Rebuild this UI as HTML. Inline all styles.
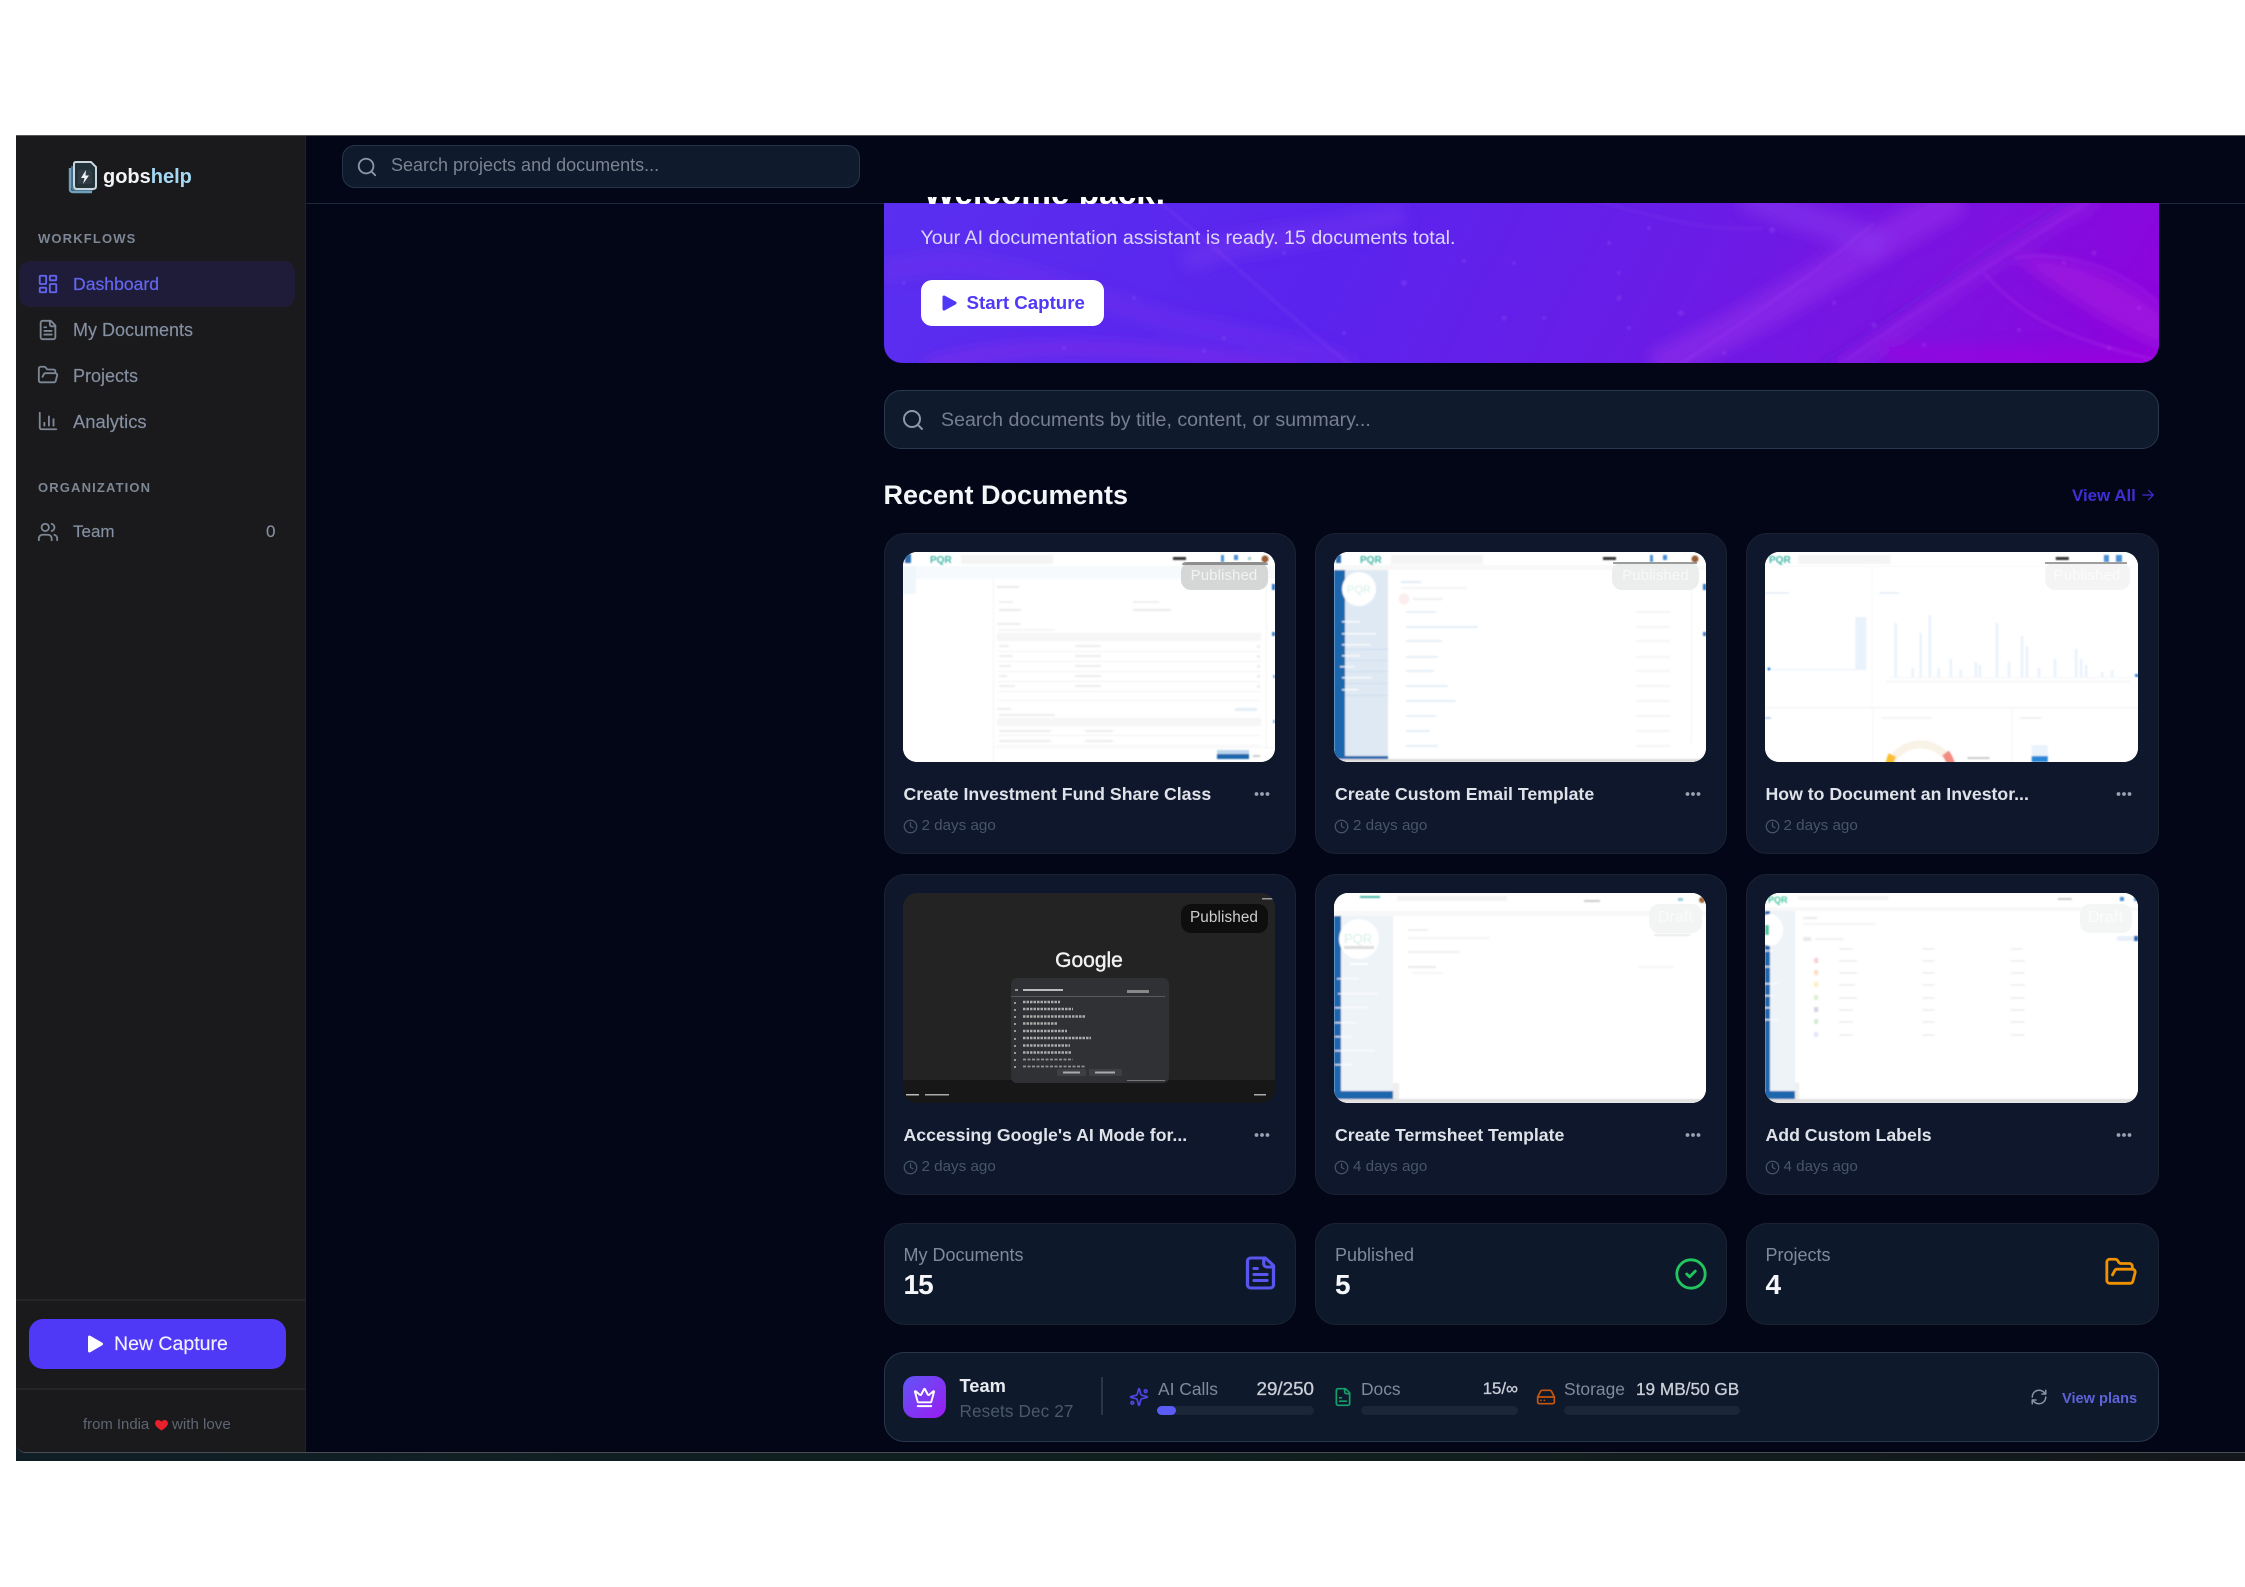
<!DOCTYPE html>
<html lang="en"><head><meta charset="utf-8"><title>gobshelp</title>
<style>
*{box-sizing:border-box;margin:0;padding:0}
html,body{width:2245px;height:1587px;background:#fff;overflow:hidden;font-family:"Liberation Sans",Arial,sans-serif}
#app{position:absolute;left:16px;top:135px;width:2229px;height:1318px;background:#020617;border-top:1px solid #555;border-bottom:1.5px solid #4a4d52;border-bottom-left-radius:10px;overflow:hidden}
.abs,.t,svg.i{position:absolute}
.t{white-space:nowrap;line-height:24px;height:24px}
svg.i{fill:none;stroke:currentColor;stroke-width:2;stroke-linecap:round;stroke-linejoin:round}
.box{position:absolute;background:#0f172a;border:1.5px solid #1e293b}
.card{position:absolute;width:412px;height:321px;background:#0e172b;border:1.5px solid #1c2230;border-radius:21px}
.thumb{position:absolute;left:18px;top:18px;width:372px;height:210px;border-radius:14px;overflow:hidden;background:#fff}
.thumb svg{display:block;width:372px;height:210px}
.title{position:absolute;left:19px;top:248px;font-size:17.7px;font-weight:700;color:#dfe3e9;line-height:24px;white-space:nowrap}
.dots{position:absolute;left:369px;top:257px;width:16px;height:6px}
.time{position:absolute;left:37px;top:280px;font-size:15.2px;color:#475569;line-height:24px;white-space:nowrap}
.clk{position:absolute;left:18px;top:285px;color:#475569}
.badge{position:absolute;top:28px;height:28px;border-radius:10px;font-size:15px;letter-spacing:.1px;line-height:28px;text-align:center;white-space:nowrap}
.nav{font-size:18px;color:#8590a2;-webkit-text-stroke:.15px #8590a2}
.sec{font-size:13px;font-weight:700;letter-spacing:1.15px;color:#7d8695}
.stat{position:absolute;top:1087px;width:412px;height:102px;background:#0e182b;border:1.5px solid #1c2230;border-radius:21px}
.stat .l{position:absolute;left:19px;top:19px;font-size:18px;color:#7f8a9c;line-height:24px;white-space:nowrap}
.stat .v{position:absolute;left:19px;top:44px;font-size:28px;font-weight:700;color:#f4f6f9;line-height:34px;letter-spacing:-1px}
.lab{font-size:17.4px;color:#7f8a9c}
.val{font-size:18.8px;color:#c9ced7;-webkit-text-stroke:.3px #c9ced7}
.bar{position:absolute;top:1270px;height:9px;background:#1b2639;border-radius:5px}
</style></head><body>
<!-- bottom strip behind the app frame -->
<div class="abs" style="left:16px;top:1440px;width:2229px;height:21px;background:linear-gradient(90deg,#101f26,#10201f 50%,#14181c)"></div>
<div id="app">

<!-- MAIN header -->
<div class="abs" style="left:290px;top:0;width:1939px;height:68px;background:#020617;border-bottom:1.5px solid #1e293b"></div>
<div class="box" style="left:326px;top:9px;width:518px;height:43px;border-radius:13px;background:#0f1a2c;border-color:#26344a"></div>
<svg class="i" style="left:340px;top:20px;color:#8d97a6" width="22" height="22" viewBox="0 0 24 24"><circle cx="11" cy="11" r="8"/><path d="m21 21-4.3-4.3"/></svg>
<div class="t" style="left:375px;top:17px;font-size:18px;color:#7b8390">Search projects and documents...</div>

<!-- hero -->
<div class="abs" style="left:867.5px;top:67px;width:1275px;height:160px;border-radius:0 0 18px 18px;overflow:hidden;background:linear-gradient(118deg,#5a2ff0 0%,#5a24ee 35%,#6a1ce6 62%,#7d12e0 82%,#8f02dc 100%)">
<svg width="1275" height="160" viewBox="0 0 1275 160" style="position:absolute;left:0;top:0" fill="none">
<defs><filter id="b1"><feGaussianBlur stdDeviation="7"/></filter><filter id="b2"><feGaussianBlur stdDeviation="1.6"/></filter><filter id="b4"><feGaussianBlur stdDeviation="1"/></filter></defs>
<g filter="url(#b1)">
<path d="M770 165C880 115 965 55 1075 -5" stroke="#a338ee" stroke-width="34" opacity=".4"/>
<path d="M860 -10C900 10 960 25 1000 45" stroke="#8e3cf0" stroke-width="30" opacity=".45"/>
<path d="M960 165C1040 110 1110 45 1210 -5" stroke="#a02be8" stroke-width="22" opacity=".3"/>
<path d="M1130 55C1190 50 1240 80 1280 110L1280 145C1220 120 1180 90 1130 55Z" fill="#a41de0" opacity=".7"/>
<path d="M300 60C360 30 420 40 520 10" stroke="#7f38f2" stroke-width="24" opacity=".35"/>
<path d="M0 70C90 40 170 85 260 110C340 135 400 130 470 165" stroke="#8438ee" stroke-width="18" opacity=".3"/>
<path d="M40 165C150 130 300 150 420 165" stroke="#9a30e6" stroke-width="14" opacity=".4"/>
<path d="M1000 150L1275 160" stroke="#a000e0" stroke-width="22" opacity=".5"/>
</g>
<g filter="url(#b2)">
<path d="M270 -5C340 50 400 110 470 165" stroke="#9a50f5" stroke-width="2" opacity=".3"/>
<path d="M930 165C1010 110 1120 40 1190 -5" stroke="#5f12d8" stroke-width="4" opacity=".35"/>
<path d="M950 165C1030 110 1140 40 1210 -5" stroke="#a83cf0" stroke-width="2" opacity=".3"/>
<path d="M1100 70C1140 115 1180 135 1275 158" stroke="#b030e8" stroke-width="2.5" opacity=".4"/>
<path d="M1130 55C1190 45 1240 70 1275 100" stroke="#b040ee" stroke-width="2" opacity=".35"/>
<path d="M790 165C850 125 920 80 990 20" stroke="#b24cf0" stroke-width="2" opacity=".25"/>
<path d="M700 -5C760 10 820 30 880 25" stroke="#8d50f5" stroke-width="2" opacity=".25"/>
</g>
<g fill="#c070ff" opacity=".2" filter="url(#b4)">
<circle cx="725" cy="40" r="2.2"/><circle cx="765" cy="25" r="2.2"/><circle cx="735" cy="70" r="2"/><circle cx="735" cy="95" r="2.6"/><circle cx="797" cy="110" r="3"/><circle cx="745" cy="125" r="2.2"/><circle cx="888" cy="27" r="3"/><circle cx="840" cy="150" r="2.2"/><circle cx="950" cy="100" r="2.2"/><circle cx="990" cy="122" r="2.6"/><circle cx="1040" cy="142" r="2.2"/><circle cx="1135" cy="127" r="2.2"/><circle cx="1210" cy="50" r="2.6"/><circle cx="1225" cy="145" r="2.2"/><circle cx="1180" cy="60" r="2"/><circle cx="1255" cy="105" r="2.2"/>
<circle cx="520" cy="80" r="3"/><circle cx="460" cy="130" r="2.2"/><circle cx="620" cy="115" r="2.6"/><circle cx="660" cy="115" r="2.2"/><circle cx="250" cy="95" r="2"/><circle cx="340" cy="135" r="2.2"/><circle cx="400" cy="50" r="2"/><circle cx="320" cy="148" r="2.2"/><circle cx="580" cy="58" r="2.2"/><circle cx="630" cy="60" r="2"/><circle cx="60" cy="120" r="2"/><circle cx="20" cy="80" r="2"/><circle cx="180" cy="145" r="2"/>
</g>
</svg>
<div class="t" style="left:37px;top:23px;font-size:19.65px;color:#dcd6fb">Your AI documentation assistant is ready. 15 documents total.</div>
<div class="abs" style="left:37px;top:77px;width:183px;height:46px;background:#fff;border-radius:11px"></div>
<svg class="abs" style="left:58px;top:91px" width="16" height="18" viewBox="0 0 16 18"><path d="M2 3 13 9 2 15Z" fill="#4f39f6" stroke="#4f39f6" stroke-width="3" stroke-linejoin="round"/></svg>
<div class="t" style="left:83px;top:88px;font-size:18.7px;font-weight:700;color:#4f39f6">Start Capture</div>
</div>
<!-- clipped welcome text -->
<div class="abs" style="left:867.5px;top:61px;width:500px;height:7px;overflow:hidden"><div class="t" style="left:40px;top:-23px;font-size:33.4px;font-weight:700;color:#fff;line-height:40px;height:40px">Welcome back!</div></div>

<!-- doc search -->
<div class="box" style="left:867.5px;top:254px;width:1275px;height:59px;border-radius:17px;background:#0f1a2c;border-color:#2a384d"></div>
<svg class="i" style="left:885px;top:272px;color:#8d97a6" width="24" height="24" viewBox="0 0 24 24"><circle cx="11" cy="11" r="8"/><path d="m21 21-4.3-4.3"/></svg>
<div class="t" style="left:925px;top:272px;font-size:19.6px;color:#767f8d">Search documents by title, content, or summary...</div>

<div class="t" style="left:867.5px;top:345.5px;font-size:27px;font-weight:700;color:#f4f6fa;line-height:26px;height:26px">Recent Documents</div>
<div class="t" style="left:2056px;top:348px;font-size:16.9px;font-weight:700;color:#3f2fd4">View All</div>
<svg class="i" style="left:2125px;top:352px;color:#3f2fd4" width="14" height="14" viewBox="0 0 24 24" stroke-width="2.6"><path d="M3 12h18M13 4l8 8-8 8"/></svg>

<!-- CARD 1 -->
<div class="card" style="left:867.5px;top:396.5px">
<div class="thumb"><svg viewBox="0 0 372 210"><rect width="372" height="210" fill="#fff"/>
<defs><filter id="b3"><feGaussianBlur stdDeviation=".7"/></filter></defs>
<g filter="url(#b3)">
<rect x="0" y="14" width="372" height="13" fill="#f6fafc"/><rect x="0" y="14" width="13" height="28" fill="#eff7fb"/>
<rect x="2" y="2" width="6" height="9" fill="#2a6db0"/><text x="27" y="11" font-family="Liberation Sans, sans-serif" font-size="10" font-weight="700" fill="#3fb6a8">PQR</text>
<rect x="58" y="3" width="92" height="9" fill="#f4f4f4"/><rect x="270" y="5" width="13" height="3" fill="#333"/>
<rect x="318" y="3" width="3" height="7" fill="#4a90d9"/><rect x="331" y="3" width="4" height="5" fill="#4a90d9"/><rect x="345" y="5" width="3" height="3" fill="#9cc"/><circle cx="362" cy="7" r="3.5" fill="#9a5c30"/>
<g opacity=".6">
<rect x="90" y="27" width="1" height="183" fill="#eee"/><rect x="363" y="27" width="1" height="168" fill="#eee"/>
<rect x="94" y="34" width="22" height="2" fill="#ddd"/><rect x="96" y="49" width="14" height="2" fill="#e5e5e5"/><rect x="230" y="49" width="26" height="2" fill="#e5e5e5"/><rect x="96" y="57" width="22" height="2" fill="#ddd"/><rect x="230" y="57" width="38" height="2" fill="#ddd"/>
<rect x="94" y="71" width="24" height="2" fill="#e2e2e2"/><rect x="96" y="77" width="56" height="2" fill="#eee"/>
<rect x="94" y="81" width="264" height="8" fill="#f0f0f0"/>
<g fill="#ededed"><rect x="94" y="99" width="264" height="1"/><rect x="94" y="109" width="264" height="1"/><rect x="94" y="119" width="264" height="1"/><rect x="94" y="129" width="264" height="1"/><rect x="94" y="139" width="264" height="1"/><rect x="94" y="148" width="264" height="1"/><rect x="94" y="183" width="264" height="1"/><rect x="94" y="193" width="264" height="1"/></g>
<g fill="#e2e2e2"><rect x="96" y="93" width="10" height="2"/><rect x="96" y="103" width="14" height="2"/><rect x="96" y="113" width="12" height="2"/><rect x="96" y="123" width="8" height="2"/><rect x="96" y="133" width="16" height="2"/><rect x="172" y="93" width="26" height="2"/><rect x="172" y="103" width="26" height="2"/><rect x="172" y="113" width="26" height="2"/><rect x="172" y="123" width="26" height="2"/><rect x="172" y="133" width="26" height="2"/><rect x="354" y="93" width="3" height="3"/><rect x="354" y="103" width="3" height="3"/><rect x="354" y="113" width="3" height="3"/><rect x="354" y="123" width="3" height="3"/><rect x="354" y="133" width="3" height="3"/><rect x="94" y="156" width="14" height="2"/><rect x="96" y="162" width="56" height="2"/><rect x="96" y="178" width="52" height="2"/><rect x="96" y="188" width="52" height="2"/><rect x="182" y="178" width="28" height="2"/><rect x="182" y="188" width="28" height="2"/></g>
<rect x="94" y="166" width="264" height="8" fill="#f0f0f0"/>
<rect x="332" y="156" width="22" height="3" fill="#cfe2f3"/>
<rect x="90" y="195" width="282" height="1" fill="#eee"/>
</g>
<rect x="314" y="202" width="32" height="5" fill="#1f66ad"/><rect x="314" y="198" width="32" height="4" fill="#bcd6ee"/><rect x="350" y="203" width="7" height="2" fill="#ccc"/>
<rect x="369" y="32" width="3" height="6" fill="#2a78c8"/><rect x="369" y="80" width="3" height="4" fill="#3a80c8"/><rect x="370" y="123" width="2" height="3" fill="#7fb0e0"/><rect x="370" y="168" width="2" height="3" fill="#7fb0e0"/>
</g></svg></div>
<div class="abs" style="left:297px;top:28px;width:86px;height:3px;background:#6f6f6f;border-radius:3px 3px 0 0;opacity:.7;z-index:1"></div>
<div class="badge" style="left:296px;width:87px;background:#d5d6d6;color:#f2f2f2">Published</div>
<div class="title">Create Investment Fund Share Class</div>
<svg class="dots" viewBox="0 0 16 6"><circle cx="2.5" cy="3" r="1.9" fill="#9aa3b2"/><circle cx="8" cy="3" r="1.9" fill="#9aa3b2"/><circle cx="13.5" cy="3" r="1.9" fill="#9aa3b2"/></svg>
<svg class="i clk" width="15" height="15" viewBox="0 0 24 24"><circle cx="12" cy="12" r="10"/><path d="M12 6v6l4 2"/></svg>
<div class="time">2 days ago</div>
</div>

<!-- CARD 2 -->
<div class="card" style="left:1299px;top:396.5px">
<div class="thumb"><svg viewBox="0 0 372 210"><rect width="372" height="210" fill="#fff"/>
<g filter="url(#b3)">
<rect x="0" y="13" width="372" height="5" fill="#f8f8f8"/><rect x="0" y="18" width="11" height="192" fill="#1f66ad"/><rect x="11" y="18" width="43" height="186" fill="#dfe9f3"/><rect x="11" y="204" width="43" height="3" fill="#1f66ad"/><rect x="0" y="207" width="372" height="3" fill="#ddd"/>
<rect x="2" y="3" width="5" height="8" fill="#2a6db0"/><text x="26" y="11" font-family="Liberation Sans, sans-serif" font-size="10" font-weight="700" fill="#3fb6a8">PQR</text>
<rect x="57" y="3" width="92" height="9" fill="#f4f4f4"/><rect x="269" y="5" width="13" height="3" fill="#333"/><rect x="316" y="3" width="3" height="7" fill="#4a90d9"/><rect x="329" y="3" width="4" height="5" fill="#4a90d9"/><circle cx="361" cy="7" r="3.5" fill="#9a5c30"/>
<circle cx="25" cy="37" r="17" fill="#fff"/><text x="13" y="41" font-family="Liberation Sans, sans-serif" font-size="11" fill="#d5efe8">PQR</text>
<g fill="#fff" opacity=".8"><rect x="8" y="69" width="18" height="1.5"/><rect x="8" y="81" width="34" height="1.5"/><rect x="8" y="92" width="28" height="1.5"/><rect x="8" y="103" width="18" height="1.5"/><rect x="6" y="114" width="14" height="1.5"/><rect x="8" y="125" width="30" height="1.5"/><rect x="8" y="137" width="16" height="1.5"/></g>
<g fill="#c6d9ec"><rect x="11" y="97" width="43" height=".8"/><rect x="11" y="108" width="43" height=".8"/><rect x="11" y="119" width="43" height=".8"/><rect x="11" y="131" width="43" height=".8"/><rect x="11" y="143" width="43" height=".8"/></g>
<g opacity=".6">
<rect x="67" y="29" width="20" height="2" fill="#cfe0f2"/><rect x="67" y="35" width="66" height="2" fill="#eee"/><circle cx="70" cy="47" r="5.5" fill="#fbe3e3"/><rect x="79" y="46" width="30" height="2" fill="#e5e5e5"/>
<g fill="#d6e5f5"><rect x="72" y="59" width="30" height="2"/><rect x="72" y="74" width="72" height="2"/><rect x="72" y="88" width="36" height="2"/><rect x="72" y="104" width="32" height="2"/><rect x="72" y="118" width="28" height="2"/><rect x="72" y="133" width="42" height="2"/><rect x="72" y="148" width="50" height="2"/><rect x="72" y="163" width="30" height="2"/><rect x="72" y="178" width="24" height="2"/><rect x="72" y="193" width="32" height="2"/></g>
<g fill="#eee"><rect x="302" y="59" width="34" height="2"/><rect x="302" y="74" width="34" height="2"/><rect x="302" y="88" width="34" height="2"/><rect x="302" y="104" width="34" height="2"/><rect x="302" y="118" width="34" height="2"/><rect x="302" y="133" width="34" height="2"/><rect x="302" y="148" width="34" height="2"/><rect x="302" y="163" width="34" height="2"/><rect x="302" y="178" width="34" height="2"/><rect x="302" y="193" width="34" height="2"/><rect x="357" y="27" width="1" height="165"/></g>
</g>
<rect x="369" y="32" width="3" height="6" fill="#2a78c8"/><rect x="369" y="80" width="3" height="4" fill="#3a80c8"/>
</g></svg></div>
<div class="abs" style="left:297px;top:28px;width:84px;height:2px;background:#777;opacity:.7;z-index:1"></div>
<div class="badge" style="left:296px;width:87px;background:#eceded;color:#f8f8f8">Published</div>
<div class="title">Create Custom Email Template</div>
<svg class="dots" viewBox="0 0 16 6"><circle cx="2.5" cy="3" r="1.9" fill="#9aa3b2"/><circle cx="8" cy="3" r="1.9" fill="#9aa3b2"/><circle cx="13.5" cy="3" r="1.9" fill="#9aa3b2"/></svg>
<svg class="i clk" width="15" height="15" viewBox="0 0 24 24"><circle cx="12" cy="12" r="10"/><path d="M12 6v6l4 2"/></svg>
<div class="time">2 days ago</div>
</div>

<!-- CARD 3 -->
<div class="card" style="left:1729.5px;top:396.5px;width:413px">
<div class="thumb" style="width:373px"><svg viewBox="0 0 372 210" style="width:373px" preserveAspectRatio="none"><rect width="372" height="210" fill="#fff"/>
<g filter="url(#b3)">
<text x="4" y="11" font-family="Liberation Sans, sans-serif" font-size="10" font-weight="700" fill="#3fb6a8">PQR</text><rect x="33" y="3" width="92" height="9" fill="#f4f4f4"/><rect x="290" y="5" width="13" height="3" fill="#333"/><rect x="338" y="3" width="5" height="7" fill="#4a90d9"/><rect x="350" y="3" width="6" height="7" fill="#4a90d9"/>
<g opacity=".6"><rect x="0" y="14" width="372" height="1" fill="#f4f4f4"/><rect x="106" y="15" width="1" height="140" fill="#f3f3f3"/><rect x="0" y="155" width="372" height="1.5" fill="#ededed"/><rect x="107" y="155" width="1" height="55" fill="#eee"/><rect x="246" y="155" width="1" height="55" fill="#eee"/>
<rect x="0" y="40" width="24" height="2" fill="#dbe8f6"/><rect x="114" y="40" width="20" height="2" fill="#dbe8f6"/></g>
<rect x="90" y="65" width="11" height="53" fill="#eaf3fc"/>
<rect x="4" y="117" width="86" height="1.5" fill="#eef4fb"/><circle cx="4" cy="117" r="1.5" fill="#2a87e0"/>
<g fill="#e9f2fc"><rect x="129" y="71" width="2.6" height="54"/><rect x="146" y="116" width="2.6" height="9"/><rect x="154" y="81" width="2.6" height="44"/><rect x="163" y="63" width="2.6" height="62"/><rect x="172" y="116" width="2.6" height="9"/><rect x="184" y="107" width="2.6" height="18"/><rect x="194" y="118" width="2.6" height="7"/><rect x="209" y="110" width="2.6" height="15"/><rect x="213" y="113" width="2.6" height="12"/><rect x="230" y="71" width="2.6" height="54"/><rect x="242" y="110" width="2.6" height="15"/><rect x="255" y="84" width="2.6" height="41"/><rect x="260" y="94" width="2.6" height="31"/><rect x="272" y="116" width="2.6" height="9"/><rect x="288" y="107" width="2.6" height="18"/><rect x="309" y="97" width="2.6" height="28"/><rect x="314" y="107" width="2.6" height="18"/><rect x="319" y="113" width="2.6" height="12"/><rect x="335" y="120" width="2.6" height="5"/><rect x="345" y="118" width="2.6" height="7"/></g>
<rect x="124" y="125" width="245" height="1" fill="#f5f5f5"/><rect x="120" y="128" width="245" height="3" fill="#f8f8f8"/>
<rect x="369" y="122" width="3" height="3" fill="#2a87e0"/>
<rect x="0" y="165" width="6" height="2" fill="#bcd6f0"/><rect x="116" y="165" width="50" height="2" fill="#f4f4f4"/><rect x="254" y="165" width="22" height="2" fill="#f2f2f2"/>
<path d="M124 214A33 33 0 0 1 186 214" stroke="#f9f2e6" stroke-width="8" fill="none"/>
<path d="M124 214A33 33 0 0 1 127 203" stroke="#fbc02d" stroke-width="8" fill="none"/><path d="M180 201A33 33 0 0 1 186 214" stroke="#f28b82" stroke-width="8" fill="none"/>
<rect x="266" y="193" width="16" height="11" fill="#eaf3fc"/><rect x="266" y="204" width="16" height="6" fill="#2b87d8"/>
<rect x="202" y="205" width="22" height="2" fill="#ccc"/>
</g></svg></div>
<div class="abs" style="left:298px;top:28px;width:82px;height:2px;background:#777;opacity:.7;z-index:1"></div>
<div class="badge" style="left:298px;width:85px;background:#f4f4f4;color:#fbfbfb">Published</div>
<div class="title">How to Document an Investor...</div>
<svg class="dots" viewBox="0 0 16 6"><circle cx="2.5" cy="3" r="1.9" fill="#9aa3b2"/><circle cx="8" cy="3" r="1.9" fill="#9aa3b2"/><circle cx="13.5" cy="3" r="1.9" fill="#9aa3b2"/></svg>
<svg class="i clk" width="15" height="15" viewBox="0 0 24 24"><circle cx="12" cy="12" r="10"/><path d="M12 6v6l4 2"/></svg>
<div class="time">2 days ago</div>
</div>

<!-- CARD 4 -->
<div class="card" style="left:867.5px;top:737.5px">
<div class="thumb" style="background:#222"><svg viewBox="0 0 372 210"><rect width="372" height="210" fill="#232323"/>
<rect y="187" width="372" height="23" fill="#171717"/>
<text x="186" y="74" text-anchor="middle" font-family="Liberation Sans, sans-serif" font-size="21" fill="#f2f2f2" stroke="#f2f2f2" stroke-width=".4">Google</text>
<rect x="108" y="85" width="158" height="105" rx="6" fill="#303134"/>
<g filter="url(#b4x)"><defs><filter id="b4x"><feGaussianBlur stdDeviation=".35"/></filter></defs>
<rect x="120" y="96" width="40" height="2" fill="#bbb"/><rect x="108" y="103" width="154" height="1" fill="#5a5a5c"/>
<g stroke="#c8c8c8" stroke-width="2.4" stroke-dasharray="2.5 1" opacity=".8"><path d="M120 109H157"/><path d="M120 116H170"/><path d="M120 123.500H182"/><path d="M120 130.500H154"/><path d="M120 138H164"/><path d="M120 145H188"/><path d="M120 152.500H167"/><path d="M120 159.500H169"/></g>
<g stroke="#aaa" stroke-width="1.8" stroke-dasharray="3 1.500" opacity=".8"><path d="M120 166.500H170"/><path d="M120 173.500H183"/></g>
<rect x="112" y="96" width="3" height="2" fill="#999"/>
<g fill="#999"><rect x="111" y="109" width="2" height="2"/><rect x="111" y="116" width="2" height="2"/><rect x="111" y="123" width="2" height="2"/><rect x="111" y="130" width="2" height="2"/><rect x="111" y="137" width="2" height="2"/><rect x="111" y="145" width="2" height="2"/><rect x="111" y="152" width="2" height="2"/><rect x="111" y="159" width="2" height="2"/><rect x="111" y="166" width="2" height="2"/><rect x="111" y="173" width="2" height="2"/></g>
<rect x="154" y="176" width="29" height="7" rx="1" fill="#3c4043"/><rect x="186" y="176" width="33" height="7" rx="1" fill="#3c4043"/><rect x="160" y="178.500" width="17" height="2" fill="#aaa"/><rect x="192" y="178.500" width="20" height="2" fill="#aaa"/>
<rect x="224" y="97" width="22" height="3" fill="#888"/><rect x="224" y="187" width="38" height="1" fill="#777"/>
<rect x="3" y="201" width="13" height="1.500" fill="#bbb"/><rect x="22" y="201" width="24" height="1.500" fill="#aaa"/><rect x="351" y="201" width="12" height="1.500" fill="#aaa"/><rect x="359" y="5" width="11" height="1.500" fill="#999"/></g></svg></div>
<div class="badge" style="left:296px;top:29px;width:87px;height:29px;background:#0e0e0e;color:#cfcfcf;font-size:15.3px">Published</div>
<div class="title">Accessing Google's AI Mode for...</div>
<svg class="dots" viewBox="0 0 16 6"><circle cx="2.5" cy="3" r="1.9" fill="#9aa3b2"/><circle cx="8" cy="3" r="1.9" fill="#9aa3b2"/><circle cx="13.5" cy="3" r="1.9" fill="#9aa3b2"/></svg>
<svg class="i clk" width="15" height="15" viewBox="0 0 24 24"><circle cx="12" cy="12" r="10"/><path d="M12 6v6l4 2"/></svg>
<div class="time">2 days ago</div>
</div>

<!-- CARD 5 -->
<div class="card" style="left:1299px;top:737.5px">
<div class="thumb"><svg viewBox="0 0 372 210"><rect width="372" height="210" fill="#fff"/>
<g filter="url(#b3)">
<rect y="18" width="372" height="5" fill="#f8f8f8"/><rect y="23" width="7" height="187" fill="#1f66ad"/><rect x="7" y="23" width="52" height="175" fill="#eef3f8"/><rect y="198" width="59" height="8" fill="#1f66ad"/><rect x="59" y="190" width="6" height="20" fill="#eee"/><rect y="206" width="372" height="4" fill="#e2e2e2"/>
<rect x="26" y="3" width="20" height="2" fill="#49b7a8"/><rect x="63" y="3" width="110" height="5" fill="#f4f4f4"/><rect x="250" y="7" width="16" height="2" fill="#ccc"/><rect x="344" y="5" width="5" height="3" fill="#9cd"/><circle cx="368" cy="7" r="3" fill="#a0683a"/>
<circle cx="25" cy="46" r="20" fill="#fff"/><text x="10" y="50" font-family="Liberation Sans, sans-serif" font-size="13" fill="#d5efe8">PQR</text><rect x="10" y="53" width="30" height="3" fill="#ddd"/><rect x="16" y="70" width="18" height="2" fill="#fff"/>
<g fill="#fff" opacity=".75"><rect x="3" y="85" width="22" height="1.5"/><rect x="4" y="100" width="40" height="1.5"/><rect x="1" y="114" width="34" height="1.5"/><rect x="1" y="129" width="22" height="1.5"/><rect x="1" y="143" width="18" height="1.5"/><rect x="1" y="157" width="40" height="1.5"/><rect x="1" y="171" width="18" height="1.5"/></g>
<g opacity=".6"><rect x="74" y="36" width="20" height="2" fill="#e5e5e5"/><rect x="74" y="44" width="82" height="2" fill="#eee"/><rect x="74" y="58" width="52" height="2" fill="#e5e5e5"/><rect x="74" y="73" width="28" height="2" fill="#ddd"/><rect x="78" y="79" width="30" height="2" fill="#eee"/><rect x="304" y="73" width="36" height="2" fill="#eee"/><rect x="320" y="41" width="36" height="2" fill="#ddd"/></g>
</g></svg></div>
<div class="badge" style="left:333px;top:29px;width:53px;height:29px;background:#f3f4f4;color:#fbfbfb;font-size:16px">Draft</div>
<div class="title">Create Termsheet Template</div>
<svg class="dots" viewBox="0 0 16 6"><circle cx="2.5" cy="3" r="1.9" fill="#9aa3b2"/><circle cx="8" cy="3" r="1.9" fill="#9aa3b2"/><circle cx="13.5" cy="3" r="1.9" fill="#9aa3b2"/></svg>
<svg class="i clk" width="15" height="15" viewBox="0 0 24 24"><circle cx="12" cy="12" r="10"/><path d="M12 6v6l4 2"/></svg>
<div class="time">4 days ago</div>
</div>

<!-- CARD 6 -->
<div class="card" style="left:1729.5px;top:737.5px;width:413px">
<div class="thumb" style="width:373px"><svg viewBox="0 0 372 210" style="width:373px" preserveAspectRatio="none"><rect width="372" height="210" fill="#fff"/>
<g filter="url(#b3)">
<rect y="14" width="372" height="4" fill="#f8f8f8"/><rect y="18" width="5" height="192" fill="#1f66ad"/><rect x="5" y="18" width="25" height="180" fill="#eef3f8"/><rect y="198" width="30" height="8" fill="#1f66ad"/><rect x="30" y="190" width="4" height="20" fill="#eee"/><rect y="206" width="372" height="4" fill="#e2e2e2"/>
<text x="3" y="10" font-family="Liberation Sans, sans-serif" font-size="9" font-weight="700" fill="#49c8a0">PQR</text><rect x="33" y="3" width="90" height="4" fill="#f4f4f4"/><rect x="292" y="5" width="14" height="2" fill="#ccc"/><rect x="354" y="4" width="4" height="4" fill="#4a90d9"/><rect x="368" y="4" width="4" height="4" fill="#4a90d9"/>
<ellipse cx="5" cy="37" rx="13" ry="16" fill="#fff"/><rect x="0" y="32" width="4" height="10" fill="#49c8a0"/>
<g fill="#fff" opacity=".8"><rect x="0" y="57" width="8" height="1.5"/><rect x="0" y="73" width="5" height="1.5"/><rect x="0" y="90" width="13" height="1.5"/><rect x="0" y="102" width="10" height="1.5"/><rect x="0" y="114" width="5" height="1.5"/><rect x="0" y="126" width="14" height="1.5"/></g>
<g opacity=".6"><rect x="38" y="24" width="14" height="2" fill="#ddd"/><rect x="38" y="30" width="72" height="2" fill="#eee"/><rect x="38" y="44" width="8" height="4" fill="#ddd"/><rect x="50" y="45" width="28" height="2" fill="#e5e5e5"/></g>
<rect x="351" y="43" width="21" height="5" fill="#e8f1fa"/><rect x="368" y="43" width="4" height="5" fill="#1f66ad"/>
<g opacity=".7"><rect x="49" y="65" width="4" height="5" fill="#f8b9c0"/><rect x="49" y="77" width="4" height="5" fill="#fbd0a8"/><rect x="49" y="89" width="4" height="5" fill="#fbe8a8"/><rect x="49" y="102" width="4" height="5" fill="#cfe8c0"/><rect x="49" y="114" width="4" height="5" fill="#c8bcd8"/><rect x="49" y="126" width="4" height="5" fill="#c0e4c0"/><rect x="49" y="139" width="4" height="5" fill="#d8daf8"/></g>
<g fill="#ebebeb" opacity=".7"><rect x="74" y="55" width="14" height="2"/><rect x="157" y="55" width="12" height="2"/><rect x="245" y="55" width="12" height="2"/><rect x="74" y="67" width="18" height="2"/><rect x="157" y="67" width="12" height="2"/><rect x="245" y="67" width="14" height="2"/><rect x="74" y="79" width="18" height="2"/><rect x="157" y="79" width="12" height="2"/><rect x="245" y="79" width="14" height="2"/><rect x="74" y="91" width="16" height="2"/><rect x="157" y="91" width="12" height="2"/><rect x="245" y="91" width="14" height="2"/><rect x="74" y="104" width="18" height="2"/><rect x="157" y="104" width="12" height="2"/><rect x="245" y="104" width="14" height="2"/><rect x="74" y="116" width="14" height="2"/><rect x="157" y="116" width="12" height="2"/><rect x="245" y="116" width="14" height="2"/><rect x="74" y="128" width="14" height="2"/><rect x="157" y="128" width="12" height="2"/><rect x="245" y="128" width="14" height="2"/><rect x="74" y="141" width="14" height="2"/><rect x="157" y="141" width="12" height="2"/><rect x="245" y="141" width="14" height="2"/></g>
</g></svg></div>
<div class="badge" style="left:333px;top:29px;width:52px;height:29px;background:#f4f5f5;color:#fcfcfc;font-size:16px">Draft</div>
<div class="title">Add Custom Labels</div>
<svg class="dots" viewBox="0 0 16 6"><circle cx="2.5" cy="3" r="1.9" fill="#9aa3b2"/><circle cx="8" cy="3" r="1.9" fill="#9aa3b2"/><circle cx="13.5" cy="3" r="1.9" fill="#9aa3b2"/></svg>
<svg class="i clk" width="15" height="15" viewBox="0 0 24 24"><circle cx="12" cy="12" r="10"/><path d="M12 6v6l4 2"/></svg>
<div class="time">4 days ago</div>
</div>

<!-- STATS -->
<div class="stat" style="left:867.5px"><div class="l">My Documents</div><div class="v">15</div>
<svg class="i" style="left:356px;top:31px;color:#5856ee" width="39" height="36" viewBox="0 0 24 24" stroke-width="1.6" preserveAspectRatio="none"><path d="M15 2H6a2 2 0 0 0-2 2v16a2 2 0 0 0 2 2h12a2 2 0 0 0 2-2V7Z"/><path d="M14 2v4a2 2 0 0 0 2 2h4"/><path d="M10 9H8"/><path d="M16 13H8"/><path d="M16 17H8"/></svg></div>
<div class="stat" style="left:1299px"><div class="l">Published</div><div class="v">5</div>
<svg class="i" style="left:358px;top:33px;color:#22c55e" width="34" height="34" viewBox="0 0 24 24" stroke-width="1.6"><circle cx="12" cy="12" r="10"/><path d="m9 12 2 2 4-4"/></svg></div>
<div class="stat" style="left:1729.5px;width:413px"><div class="l">Projects</div><div class="v">4</div>
<svg class="i" style="left:357px;top:31px;color:#ee9200" width="34" height="34" viewBox="0 0 24 24" stroke-width="1.7"><path d="m6 14 1.5-2.9A2 2 0 0 1 9.24 10H20a2 2 0 0 1 1.94 2.5l-1.54 6a2 2 0 0 1-1.95 1.5H4a2 2 0 0 1-2-2V5a2 2 0 0 1 2-2h3.9a2 2 0 0 1 1.69.9l.81 1.2a2 2 0 0 0 1.67.9H18a2 2 0 0 1 2 2v2"/></svg></div>

<!-- PLAN BAR -->
<div class="box" style="left:867.5px;top:1216px;width:1275px;height:90px;border-radius:20px;background:#0f192c;border-color:#28364c"></div>
<div class="abs" style="left:887px;top:1240px;width:43px;height:42px;border-radius:12px;background:linear-gradient(135deg,#6055f6,#9a1cf2)"></div>
<svg class="i" style="left:897px;top:1250px;color:#fff" width="23" height="23" viewBox="0 0 24 24"><path d="M11.562 3.266a.5.5 0 0 1 .876 0L15.39 8.87a1 1 0 0 0 1.516.294L21.183 5.5a.5.5 0 0 1 .798.519l-2.834 10.246a1 1 0 0 1-.956.734H5.81a1 1 0 0 1-.957-.734L2.02 6.02a.5.5 0 0 1 .798-.519l4.276 3.664a1 1 0 0 0 1.516-.294z"/><path d="M5 21h14"/></svg>
<div class="t" style="left:943.5px;top:1238px;font-size:18.3px;font-weight:700;color:#e8ebf0">Team</div>
<div class="t" style="left:943.5px;top:1263px;font-size:17.2px;letter-spacing:.1px;color:#4b586c">Resets Dec 27</div>
<div class="abs" style="left:1085px;top:1241px;width:1.5px;height:38px;background:#2a3547"></div>

<svg class="i" style="left:1113px;top:1251px;color:#4f46e5" width="20" height="20" viewBox="0 0 24 24"><path d="M9.937 15.5A2 2 0 0 0 8.5 14.063l-6.135-1.582a.5.5 0 0 1 0-.962L8.5 9.936A2 2 0 0 0 9.937 8.5l1.582-6.135a.5.5 0 0 1 .963 0L14.063 8.5A2 2 0 0 0 15.5 9.937l6.135 1.581a.5.5 0 0 1 0 .964L15.5 14.063a2 2 0 0 0-1.437 1.437l-1.582 6.135a.5.5 0 0 1-.963 0z"/><circle cx="20" cy="5" r="1.6"/><circle cx="4" cy="19" r="1.6"/></svg>
<div class="t lab" style="left:1142px;top:1241px">AI Calls</div>
<div class="t val" style="right:931px;top:1241px">29/250</div>
<div class="bar" style="left:1141px;width:157px"></div><div class="bar" style="left:1141px;width:19px;background:#5b5cf6"></div>

<svg class="i" style="left:1317px;top:1251px;color:#14a06a" width="20" height="20" viewBox="0 0 24 24"><path d="M15 2H6a2 2 0 0 0-2 2v16a2 2 0 0 0 2 2h12a2 2 0 0 0 2-2V7Z"/><path d="M14 2v4a2 2 0 0 0 2 2h4"/><path d="M10 13H8"/><path d="M16 17H8"/></svg>
<div class="t lab" style="left:1345px;top:1241px">Docs</div>
<div class="t val" style="right:727px;top:1241px;font-size:16.8px">15/∞</div>
<div class="bar" style="left:1345px;width:157px"></div>

<svg class="i" style="left:1520px;top:1251px;color:#c8560c" width="20" height="20" viewBox="0 0 24 24"><line x1="22" y1="12" x2="2" y2="12"/><path d="M5.45 5.11 2 12v6a2 2 0 0 0 2 2h16a2 2 0 0 0 2-2v-6l-3.45-6.89A2 2 0 0 0 16.76 4H7.24a2 2 0 0 0-1.79 1.11z"/><line x1="6" y1="16" x2="6.01" y2="16"/><line x1="10" y1="16" x2="10.01" y2="16"/></svg>
<div class="t lab" style="left:1548px;top:1241px">Storage</div>
<div class="t val" style="left:1620px;top:1241px;font-size:17.2px">19 MB/50 GB</div>
<div class="bar" style="left:1548px;width:176px"></div>

<svg class="i" style="left:2014px;top:1252px;color:#8a94a3" width="18" height="18" viewBox="0 0 24 24"><path d="M3 12a9 9 0 0 1 9-9 9.75 9.75 0 0 1 6.74 2.74L21 8"/><path d="M21 3v5h-5"/><path d="M21 12a9 9 0 0 1-9 9 9.75 9.75 0 0 1-6.74-2.74L3 16"/><path d="M8 16H3v5"/></svg>
<div class="t" style="left:2046px;top:1251px;font-size:14.6px;font-weight:700;color:#5d63d8">View plans</div>

<!-- SIDEBAR -->
<div class="abs" style="left:0;top:0;width:290px;height:1317px;background:#1a1a1c;border-right:1.5px solid #232326;border-bottom-left-radius:10px">
<svg class="abs" style="left:52px;top:24px" width="30" height="34" viewBox="0 0 30 34" fill="none">
<path d="M2 8 L2 29 Q2 32 5 32 L24 32" stroke="#6f9fbb" stroke-width="2.4"/><path d="M4 6 L4 27 Q4 30 7 30 L25 30" stroke="#4e7f9c" stroke-width="1.6"/>
<path d="M8 2 H23 L28 7 V26 Q28 29 25 29 H9 Q6 29 6 26 V4 Q6 2 8 2Z" fill="#24323a" stroke="#c9d6de" stroke-width="2"/>
<rect x="10" y="10" width="14" height="14" rx="2" fill="#2f3c44"/>
<path d="M18 10 L13 18 H16.5 L15 24 L21 15.5 H17.5 Z" fill="#f0f4f7"/>
</svg>
<div class="t" style="left:87px;top:29px;font-size:20px;font-weight:700;color:#f1f3f5">gobs<span style="color:#a5d8f3">help</span></div>

<div class="t sec" style="left:22px;top:91px">WORKFLOWS</div>
<div class="abs" style="left:3px;top:125px;width:276px;height:46px;border-radius:11px;background:#1f1c39"></div>
<svg class="i" style="left:21px;top:137px;color:#6366f1" width="22" height="22" viewBox="0 0 24 24"><rect width="7" height="9" x="3" y="3" rx="1"/><rect width="7" height="5" x="14" y="3" rx="1"/><rect width="7" height="9" x="14" y="12" rx="1"/><rect width="7" height="5" x="3" y="16" rx="1"/></svg>
<div class="t nav" style="left:57px;top:136px;font-size:17.6px;color:#6366f1;-webkit-text-stroke:.2px #6366f1">Dashboard</div>

<svg class="i" style="left:21px;top:183px;color:#7d8796" width="22" height="22" viewBox="0 0 24 24"><path d="M15 2H6a2 2 0 0 0-2 2v16a2 2 0 0 0 2 2h12a2 2 0 0 0 2-2V7Z"/><path d="M14 2v4a2 2 0 0 0 2 2h4"/><path d="M10 9H8"/><path d="M16 13H8"/><path d="M16 17H8"/></svg>
<div class="t nav" style="left:57px;top:182px">My Documents</div>

<svg class="i" style="left:21px;top:228px;color:#7d8796" width="22" height="22" viewBox="0 0 24 24"><path d="m6 14 1.5-2.9A2 2 0 0 1 9.24 10H20a2 2 0 0 1 1.94 2.5l-1.54 6a2 2 0 0 1-1.95 1.5H4a2 2 0 0 1-2-2V5a2 2 0 0 1 2-2h3.9a2 2 0 0 1 1.69.9l.81 1.2a2 2 0 0 0 1.67.9H18a2 2 0 0 1 2 2v2"/></svg>
<div class="t nav" style="left:57px;top:228px">Projects</div>

<svg class="i" style="left:21px;top:274px;color:#7d8796" width="22" height="22" viewBox="0 0 24 24"><path d="M3 3v16a2 2 0 0 0 2 2h16"/><path d="M8 17v-3"/><path d="M13 17V7"/><path d="M18 17V10"/></svg>
<div class="t nav" style="left:57px;top:274px;font-size:18.4px">Analytics</div>

<div class="t sec" style="left:22px;top:340px">ORGANIZATION</div>
<svg class="i" style="left:21px;top:385px;color:#7d8796" width="22" height="22" viewBox="0 0 24 24"><path d="M16 21v-2a4 4 0 0 0-4-4H6a4 4 0 0 0-4 4v2"/><circle cx="9" cy="7" r="4"/><path d="M22 21v-2a4 4 0 0 0-3-3.87"/><path d="M16 3.13a4 4 0 0 1 0 7.75"/></svg>
<div class="t nav" style="left:57px;top:384px;font-size:17px">Team</div>
<div class="t nav" style="left:250px;top:384px;font-size:17px">0</div>

<div class="abs" style="left:0;top:1163px;width:289px;height:1.5px;background:#252528"></div>
<div class="abs" style="left:13px;top:1183px;width:257px;height:50px;border-radius:14px;background:#4f39f6"></div>
<svg class="abs" style="left:71px;top:1198px" width="18" height="20" viewBox="0 0 18 20"><path d="M2.5 3 14.500 10 2.500 17Z" fill="#fff" stroke="#fff" stroke-width="3" stroke-linejoin="round"/></svg>
<div class="t" style="left:98px;top:1196px;font-size:19.5px;color:#f2f1fe;-webkit-text-stroke:.15px #f2f1fe">New Capture</div>
<div class="abs" style="left:0;top:1252px;width:289px;height:1.5px;background:#252528"></div>
<div class="t" style="left:67px;top:1277px;font-size:14.9px;color:#5f6572">from India</div>
<svg class="abs" style="left:139px;top:1284px" width="13" height="11" viewBox="0 0 14 12"><path d="M7 11.5C2 8 0 6 0 3.5 0 1.5 1.5 0 3.4 0 5 0 6.3.9 7 2 7.7.9 9 0 10.6 0 12.5 0 14 1.5 14 3.5 14 6 12 8 7 11.5Z" fill="#e6202c"/></svg>
<div class="t" style="left:156px;top:1277px;font-size:15.1px;color:#5f6572">with love</div>
</div>
</div>
</body></html>
